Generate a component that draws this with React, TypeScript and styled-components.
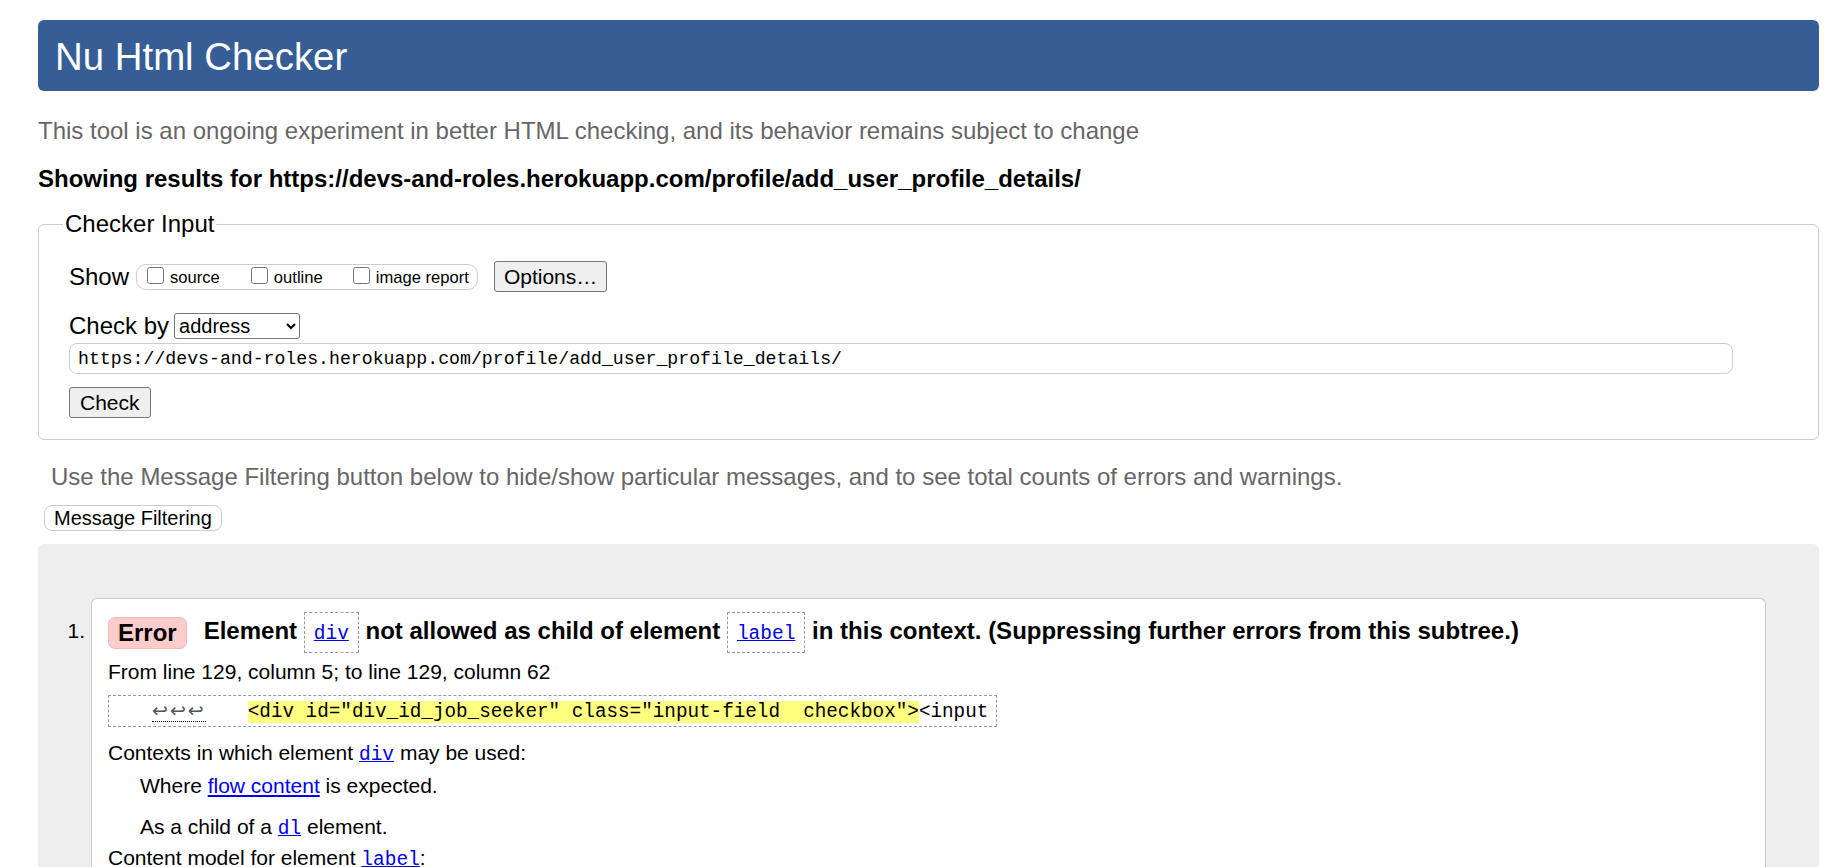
import React from "react";
import styled, { createGlobalStyle } from "styled-components";

const GlobalStyle = createGlobalStyle`
  html, body {
    margin: 0;
    padding: 0;
    overflow: hidden;
    background: #fff;
  }
  body {
    font-family: "Liberation Sans", Arial, sans-serif;
    font-size: 24px;
    color: #000;
  }
`;

const mono = `"Liberation Mono", "DejaVu Sans Mono", monospace`;

const Page = styled.div`
  padding: 20px 27px 0 38px;
`;

const Header = styled.h1`
  margin: 0;
  height: 71px;
  box-sizing: border-box;
  display: flex;
  align-items: center;
  padding: 3px 17px 0;
  background: #365d95;
  color: #fff;
  font-weight: normal;
  font-size: 38.4px;
  border-radius: 6px;
`;

const Intro = styled.p`
  margin: 26px 0 0;
  color: #666;
  line-height: 28px;
`;

const Showing = styled.p`
  margin: 20px 0 0;
  font-weight: bold;
  line-height: 28px;
`;

const Fieldset = styled.fieldset`
  margin: 17px 0 0;
  padding: 23px 30px 21px;
  border: 1px solid #ccc;
  border-radius: 6px;
  min-width: 0;
`;

const Legend = styled.legend`
  padding: 0 2px;
  margin-left: -6px;
  line-height: 28px;
  font-size: 24px;
`;

const Row = styled.div<{ $top?: number }>`
  display: flex;
  align-items: center;
  margin-top: ${(p) => p.$top ?? 0}px;
`;

const FieldLabel = styled.span`
  line-height: 28px;
`;

const CheckGroup = styled.div`
  display: flex;
  align-items: center;
  height: 26px;
  box-sizing: border-box;
  margin-left: 7px;
  padding: 0 8px 0 10px;
  border: 1px solid #ccc;
  border-radius: 10px;
`;

const CheckItem = styled.label<{ $gap?: number }>`
  display: flex;
  align-items: center;
  font-size: 16.6px;
  margin-left: ${(p) => p.$gap ?? 0}px;
  padding-top: 2px;
`;

const Box = styled.input`
  width: 17px;
  height: 17px;
  margin: 0 6px 4px 0;
`;

const Button = styled.button<{ $left?: number }>`
  height: 31px;
  margin-left: ${(p) => p.$left ?? 0}px;
  padding: 0 9px;
  background: #efefef;
  border: 1px solid #767676;
  border-radius: 3px;
  font-family: "Liberation Sans", Arial, sans-serif;
  font-size: 21px;
  color: #000;
`;

const Select = styled.select`
  margin-left: 5px;
  width: 126px;
  height: 26px;
  font-family: "Liberation Sans", Arial, sans-serif;
  font-size: 20px;
  color: #000;
  background: #fff;
  border: 1px solid #767676;
  border-radius: 3px;
`;

const UrlInput = styled.input`
  display: block;
  box-sizing: border-box;
  margin-top: 3px;
  width: calc(100% - 55px);
  height: 31px;
  padding: 0 8px;
  border: 1px solid #ccc;
  border-radius: 8px;
  font-family: ${mono};
  font-size: 18.2px;
  color: #000;
`;

const CheckButton = styled(Button)`
  display: block;
  margin-top: 13px;
  padding: 0 10px;
`;

const FilterHint = styled.p`
  margin: 23px 0 0 13px;
  color: #666;
  line-height: 28px;
`;

const FilterButton = styled.button`
  display: block;
  margin: 14px 0 0 6px;
  height: 26px;
  padding: 0 9px;
  background: #fff;
  border: 1px solid #ccc;
  border-radius: 8px;
  font-family: "Liberation Sans", Arial, sans-serif;
  font-size: 20px;
  color: #000;
`;

const Results = styled.div`
  margin-top: 13px;
  background: #eee;
  border-radius: 6px 6px 0 0;
  padding: 54px 53px 0 0;
  display: grid;
  grid-template-columns: 53px 1fr;
  min-height: 400px;
`;

const Number = styled.div`
  padding: 14px 6px 0 0;
  text-align: right;
  font-size: 21px;
  line-height: 37px;
`;

const Card = styled.div`
  background: #fff;
  border: 1px solid #ccc;
  border-bottom: none;
  border-radius: 6px 6px 0 0;
  padding: 13px 16px 0;
`;

const Title = styled.p`
  margin: 0;
  font-weight: bold;
  line-height: 37px;
  font-size: 24px;
`;

const Badge = styled.strong`
  display: inline-block;
  line-height: 30px;
  padding: 0 9px;
  background: #ffcccc;
  border: 1px solid #f2b9b9;
  border-radius: 7px;
  vertical-align: middle;
  margin-right: 17px;
`;

const Chip = styled.span`
  display: inline-block;
  line-height: 35px;
  padding: 0 9px;
  border: 1px dashed #999;
  vertical-align: middle;
`;

const CodeLink = styled.a`
  font-family: ${mono};
  font-weight: normal;
  font-size: 19.5px;
  color: #00e;
  text-decoration: underline;
`;

const TextLink = styled.a`
  color: #00e;
  text-decoration: underline;
`;

const Line = styled.p<{ $top: number; $indent?: number }>`
  margin: ${(p) => p.$top}px 0 0 ${(p) => p.$indent ?? 0}px;
  font-size: 21px;
  line-height: 26px;
`;

const Extract = styled.p`
  margin: 10px 0 0;
  width: fit-content;
  border: 1px dashed #999;
  line-height: 28px;
  font-family: ${mono};
  font-size: 19.3px;
  white-space: pre;
  padding: 0 8px 0 43px;
`;

const Lf = styled.span`
  font-family: "DejaVu Sans", sans-serif;
  font-size: 19px;
  letter-spacing: 2px;
  color: #555;
  border-bottom: 1px dotted #000;
  margin-right: 42px;
`;

const Mark = styled.mark`
  background: #ffff80;
  color: #000;
`;

export default function App() {
  return (
    <>
      <GlobalStyle />
      <Page>
        <Header>Nu Html Checker</Header>
        <Intro>
          This tool is an ongoing experiment in better HTML checking, and its
          behavior remains subject to change
        </Intro>
        <Showing>
          Showing results for
          https://devs-and-roles.herokuapp.com/profile/add_user_profile_details/
        </Showing>
        <Fieldset>
          <Legend>Checker Input</Legend>
          <Row>
            <FieldLabel>Show</FieldLabel>
            <CheckGroup>
              <CheckItem>
                <Box type="checkbox" />
                source
              </CheckItem>
              <CheckItem $gap={31}>
                <Box type="checkbox" />
                outline
              </CheckItem>
              <CheckItem $gap={30}>
                <Box type="checkbox" />
                image report
              </CheckItem>
            </CheckGroup>
            <Button $left={16}>Options…</Button>
          </Row>
          <Row $top={20}>
            <FieldLabel>Check by</FieldLabel>
            <Select defaultValue="address">
              <option value="address">address</option>
              <option value="file">file upload</option>
              <option value="text">text input</option>
            </Select>
          </Row>
          <UrlInput
            type="url"
            defaultValue="https://devs-and-roles.herokuapp.com/profile/add_user_profile_details/"
          />
          <CheckButton>Check</CheckButton>
        </Fieldset>
        <FilterHint>
          Use the Message Filtering button below to hide/show particular
          messages, and to see total counts of errors and warnings.
        </FilterHint>
        <FilterButton>Message Filtering</FilterButton>
        <Results>
          <Number>1.</Number>
          <Card>
            <Title>
              <Badge>Error</Badge>Element{" "}
              <Chip>
                <CodeLink href="#">div</CodeLink>
              </Chip>{" "}
              not allowed as child of element{" "}
              <Chip>
                <CodeLink href="#">label</CodeLink>
              </Chip>{" "}
              in this context. (Suppressing further errors from this subtree.)
            </Title>
            <Line $top={6}>From line 129, column 5; to line 129, column 62</Line>
            <Extract>
              <Lf>↩↩↩</Lf>
              <Mark>{'<div id="div_id_job_seeker" class="input-field  checkbox">'}</Mark>
              {"<input"}
            </Extract>
            <Line $top={13}>
              Contexts in which element <CodeLink href="#">div</CodeLink> may be
              used:
            </Line>
            <Line $top={5} $indent={32}>
              Where <TextLink href="#">flow content</TextLink> is expected.
            </Line>
            <Line $top={15} $indent={32}>
              As a child of a <CodeLink href="#">dl</CodeLink> element.
            </Line>
            <Line $top={3}>
              Content model for element <CodeLink href="#">label</CodeLink>:
            </Line>
            <Line $top={7} $indent={32}>
              Phrasing content, but with no descendant labelable elements unless
              it is the element's labeled control, and no descendant label
              elements.
            </Line>
          </Card>
        </Results>
      </Page>
    </>
  );
}
